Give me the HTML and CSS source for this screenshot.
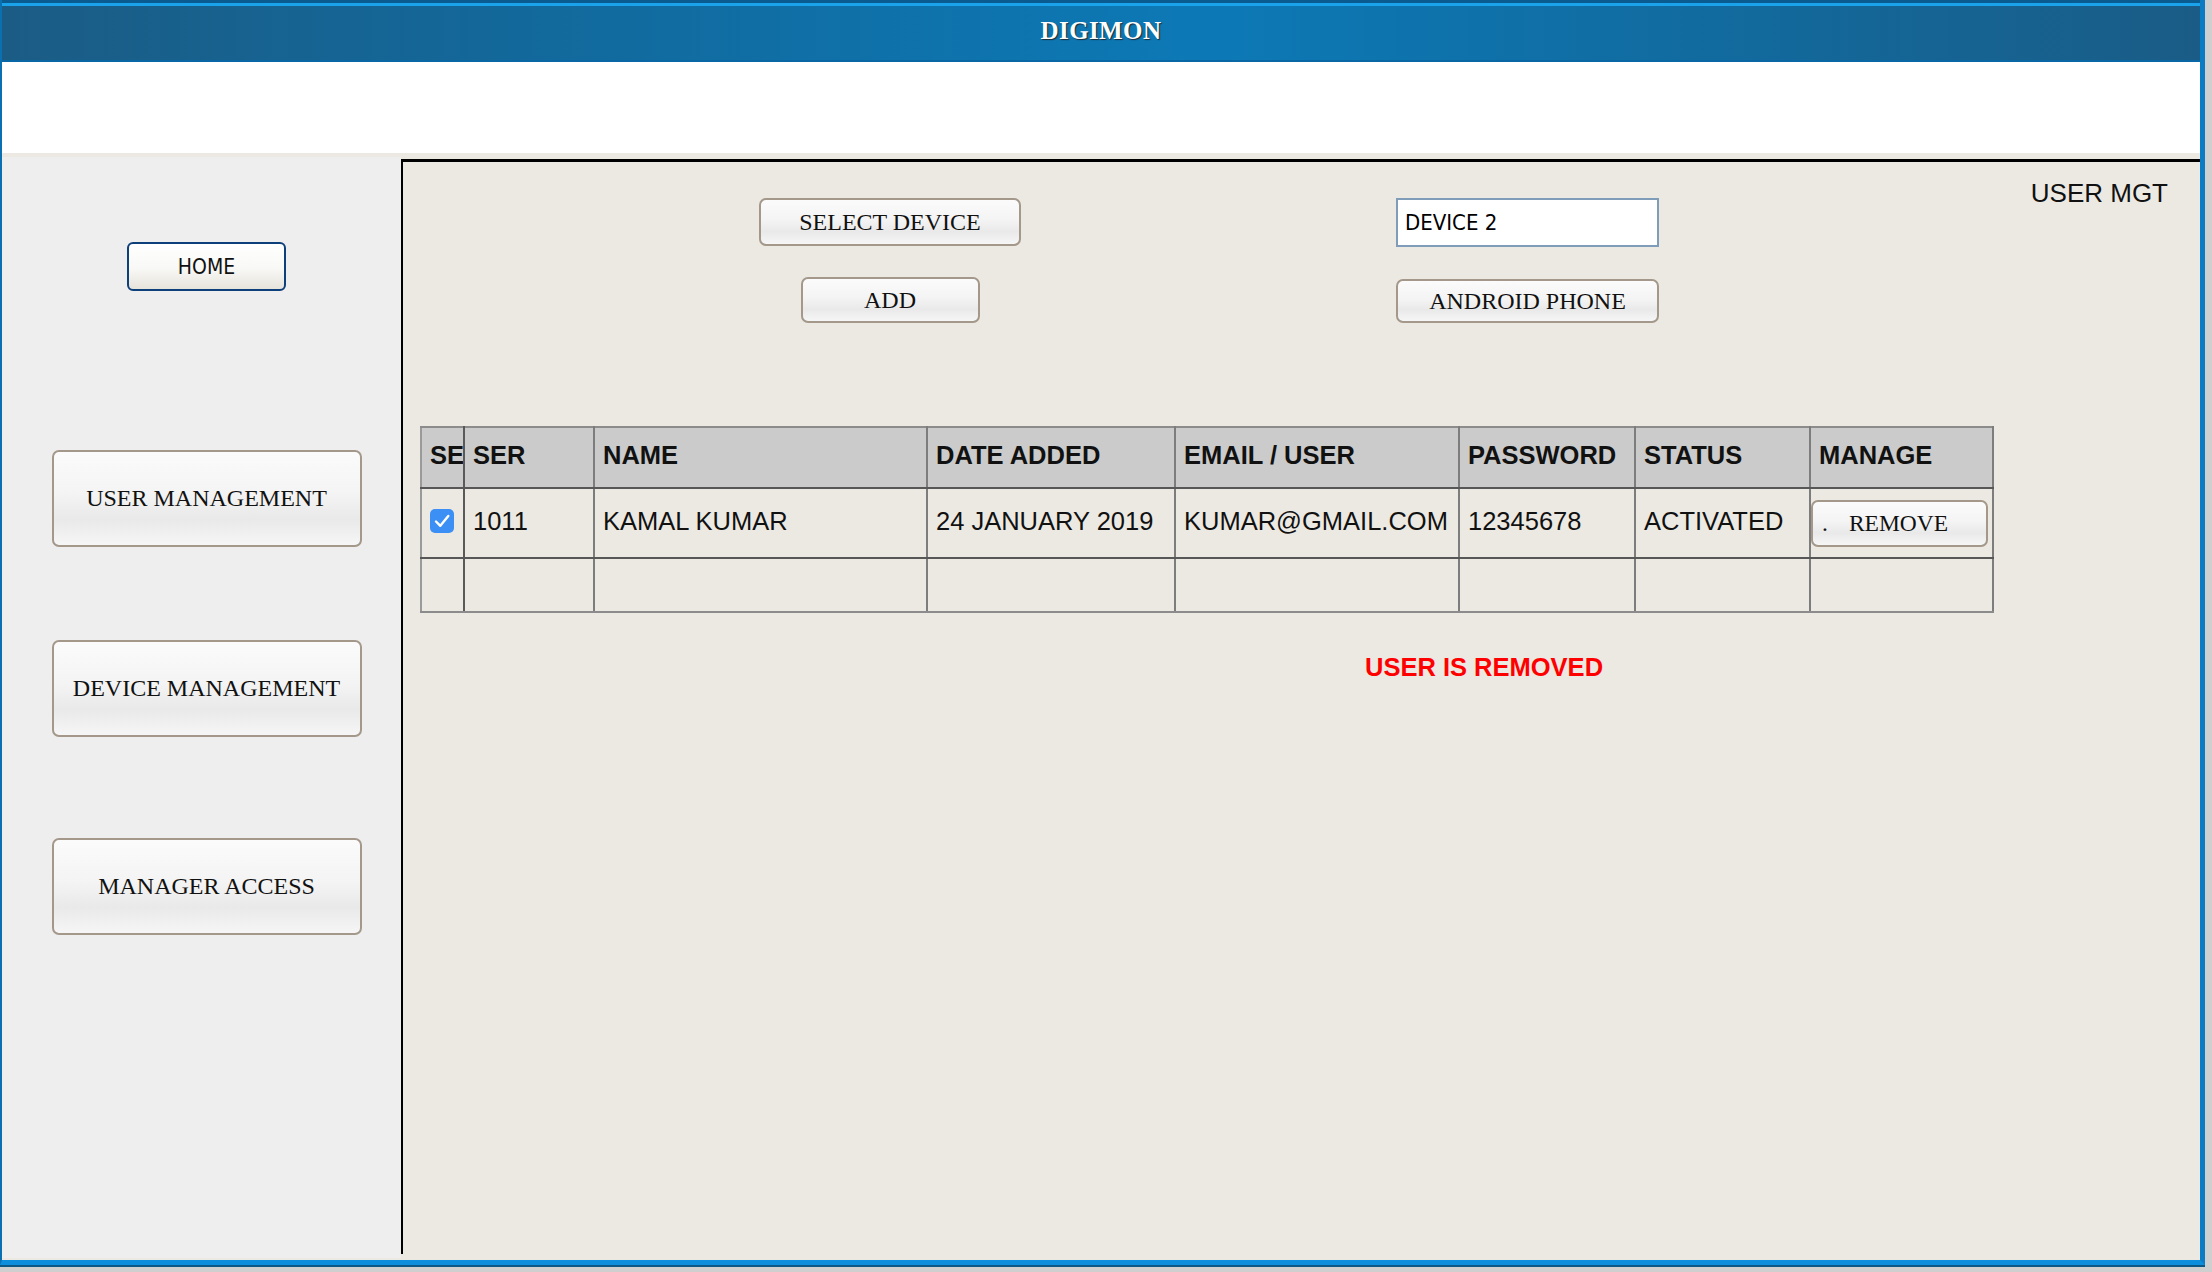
FILE: index.html
```html
<!DOCTYPE html>
<html lang="en">
<head>
<meta charset="utf-8">
<title>DIGIMON - User Management</title>
<link rel="stylesheet" href="styles.css">
</head>
<body>
<div class="window">
  <header class="titlebar">
    <h1 class="app-title">DIGIMON</h1>
  </header>
  <div class="banner"></div>
  <div class="main">
    <nav class="sidebar">
      <button class="btn btn-home">HOME</button>
      <button class="btn btn-nav btn-user">USER MANAGEMENT</button>
      <button class="btn btn-nav btn-device">DEVICE MANAGEMENT</button>
      <button class="btn btn-nav btn-access">MANAGER ACCESS</button>
    </nav>
    <section class="content">
      <div class="top-row">
        <div class="col-a">
          <button class="btn btn-select">SELECT DEVICE</button>
          <button class="btn btn-add">ADD</button>
        </div>
        <div class="col-b">
          <div class="field">DEVICE 2</div>
          <button class="btn btn-android">ANDROID PHONE</button>
        </div>
        <div class="page-label">USER MGT</div>
      </div>

      <table class="users">
        <colgroup>
          <col class="c-sel">
          <col class="c-ser">
          <col class="c-name">
          <col class="c-date">
          <col class="c-email">
          <col class="c-pass">
          <col class="c-status">
          <col class="c-manage">
        </colgroup>
        <thead>
          <tr class="head">
            <th>SE</th>
            <th>SER</th>
            <th>NAME</th>
            <th>DATE ADDED</th>
            <th>EMAIL / USER</th>
            <th>PASSWORD</th>
            <th>STATUS</th>
            <th>MANAGE</th>
          </tr>
        </thead>
        <tbody>
          <tr class="row">
            <td><span class="check"><svg viewBox="0 0 24 24" width="24" height="24"><path d="M6 12.5 L10.3 16.8 L18.3 7" fill="none" stroke="#fff" stroke-width="2.4" stroke-linecap="round" stroke-linejoin="round"/></svg></span></td>
            <td>1011</td>
            <td>KAMAL KUMAR</td>
            <td>24 JANUARY 2019</td>
            <td>KUMAR@GMAIL.COM</td>
            <td>12345678</td>
            <td>ACTIVATED</td>
            <td class="manage-cell"><button class="btn btn-remove">.<span class="remove-label">REMOVE</span></button></td>
          </tr>
          <tr class="empty">
            <td></td><td></td><td></td><td></td><td></td><td></td><td></td><td></td>
          </tr>
        </tbody>
      </table>

      <p class="status-msg">USER IS REMOVED</p>
    </section>
  </div>
</div>
</body>
</html>
```

FILE: styles.css
```css
html, body {
  margin: 0;
  padding: 0;
}

body {
  background: #cfcfcf;
  width: 2212px;
  height: 1272px;
  overflow: hidden;
  font-family: "Liberation Sans", Arial, sans-serif;
  color: #111;
}

.window {
  width: 2198px;
  height: 1260px;
  border-left: 2px solid #0b70b2;
  border-right: 5px solid #0b7cc3;
  border-bottom: 5px solid #0c8edc;
  box-shadow: 0 2px 0 #0b5884;
  display: flex;
  flex-direction: column;
  background: #ffffff;
}

.titlebar {
  height: 54px;
  border-top: 3px solid #0a5b90;
  box-shadow: inset 0 3px 0 #1aa3ea;
  padding-top: 3px;
  border-bottom: 2px solid #0a67a6;
  background: linear-gradient(90deg, #1b5c85 0%, #12699c 25%, #0c79b6 55%, #12699c 80%, #1a5c86 100%);
  display: flex;
  align-items: center;
  justify-content: center;
}

.app-title {
  margin: 0 0 4px 0;
  font-family: "Liberation Serif", "Times New Roman", serif;
  font-weight: bold;
  font-size: 25px;
  letter-spacing: 0.4px;
  color: #ffffff;
  text-shadow: 1px 1px 1px #1d2a33;
}

.banner {
  height: 91px;
  background: #ffffff;
}

.main {
  flex: 1;
  display: flex;
  background: #ece9e3;
  padding-top: 4px;
  padding-bottom: 2px;
}

/* ---------- Sidebar ---------- */
.sidebar {
  width: 389px;
  padding-left: 10px;
  padding-top: 85px;
  background: #eeeeee;
  display: flex;
  flex-direction: column;
  align-items: center;
}

.btn {
  box-sizing: border-box;
  margin: 0;
  padding: 0;
  border: 2px solid #a3988a;
  border-radius: 7px;
  background: linear-gradient(180deg, #fbfbfb 0%, #f4f4f4 45%, #e9e9e9 72%, #f6f6f6 100%);
  font-family: "Liberation Serif", "Times New Roman", serif;
  font-size: 24px;
  color: #111;
  cursor: pointer;
}

.btn-home {
  width: 159px;
  height: 49px;
  border-color: #0d3f7a;
  border-radius: 6px;
  background: linear-gradient(180deg, #ffffff 0%, #f8f8f6 55%, #e6e3db 100%);
  font-family: "DejaVu Sans Condensed", "DejaVu Sans", sans-serif;
  font-size: 21px;
}

.btn-nav {
  width: 310px;
  height: 97px;
}

.btn-user {
  margin-top: 159px;
}

.btn-device {
  margin-top: 93px;
}

.btn-access {
  margin-top: 101px;
}

/* ---------- Content ---------- */
.content {
  flex: 1;
  margin-top: 2px;
  margin-bottom: 4px;
  border-top: 3px solid #000000;
  border-left: 2px solid #000000;
  background: #ece9e3;
}

.top-row {
  display: flex;
  align-items: flex-start;
  padding: 16px 32px 0 356px;
}

.col-a {
  margin-top: 20px;
  width: 262px;
  display: flex;
  flex-direction: column;
  align-items: center;
  gap: 31px;
}

.btn-select {
  width: 262px;
  height: 48px;
}

.btn-add {
  width: 179px;
  height: 46px;
}

.col-b {
  margin-top: 20px;
  margin-left: 375px;
  width: 263px;
  display: flex;
  flex-direction: column;
  gap: 32px;
}

.field {
  box-sizing: border-box;
  height: 49px;
  border: 2px solid #7f9db9;
  background: #ffffff;
  padding-left: 7px;
  display: flex;
  align-items: center;
  font-family: "DejaVu Sans Condensed", "DejaVu Sans", sans-serif;
  font-size: 22px;
  color: #000;
}

.btn-android {
  width: 263px;
  height: 44px;
}

.page-label {
  margin-left: auto;
  font-size: 26px;
  line-height: 30px;
  color: #111;
}

/* ---------- Table ---------- */
.users {
  margin: 103px 0 0 17px;
  border-collapse: collapse;
  table-layout: fixed;
  width: 1572px;
  font-size: 25.5px;
  color: #111;
}

.c-sel { width: 43px; }
.c-ser { width: 130px; }
.c-name { width: 333px; }
.c-date { width: 248px; }
.c-email { width: 284px; }
.c-pass { width: 176px; }
.c-status { width: 175px; }
.c-manage { width: 183px; }

.users th,
.users td {
  border-left: 2px solid #7d7d7d;
  border-right: 2px solid #7d7d7d;
  border-top: 2px solid #575757;
  border-bottom: 2px solid #575757;
  padding: 0 0 4px 8px;
  text-align: left;
  white-space: nowrap;
  overflow: hidden;
  vertical-align: middle;
}

.users th {
  background: #cbcbcb;
  font-weight: bold;
  border-top-color: #8c8c8c;
}

.users th:first-child,
.users td:first-child {
  border-left-color: #9a9a9a;
  border-right-color: #5a5a5a;
}

.users .empty td {
  border-bottom-color: #8c8c8c;
}

.head { height: 61px; }
.row { height: 70px; }
.empty { height: 54px; }

.check {
  display: block;
  width: 24px;
  height: 24px;
  border-radius: 5px;
  background: #3c8ff4;
}

.check svg {
  display: block;
}

.users td.manage-cell {
  padding: 0;
}

.btn-remove {
  display: block;
  width: 177px;
  height: 47px;
  padding-left: 9px;
  text-align: left;
  font-size: 23.5px;
}

.remove-label {
  margin-left: 21px;
}

.status-msg {
  margin: 39px 0 0 962px;
  font-size: 25.5px;
  line-height: 30px;
  font-weight: bold;
  color: #ff0000;
}
```
